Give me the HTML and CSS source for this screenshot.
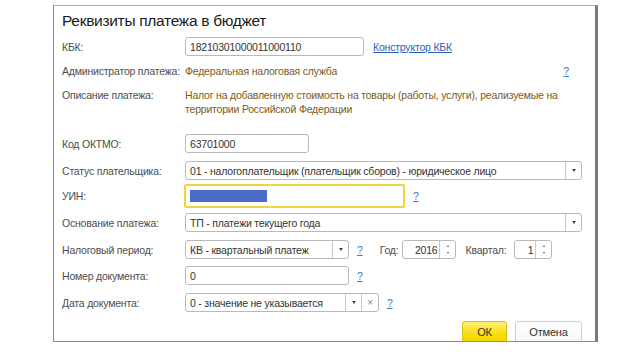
FILE: index.html
```html
<!DOCTYPE html>
<html lang="ru">
<head>
<meta charset="utf-8">
<title>Реквизиты платежа в бюджет</title>
<link rel="stylesheet" href="styles.css">
</head>
<body>
<div class="dialog">
  <div class="title">Реквизиты платежа в бюджет</div>

  <div class="row r-kbk">
    <div class="label">КБК:</div>
    <div class="field w-kbk"><span class="val">18210301000011000110</span></div>
    <a class="link" href="#">Конструктор КБК</a>
  </div>

  <div class="row r-admin">
    <div class="label">Администратор платежа:</div>
    <div class="info">Федеральная налоговая служба</div>
    <a class="help help-right" href="#">?</a>
  </div>

  <div class="row r-desc">
    <div class="label">Описание платежа:</div>
    <div class="info multi">Налог на добавленную стоимость на товары (работы, услуги), реализуемые на территории Российской Федерации</div>
  </div>

  <div class="row r-oktmo">
    <div class="label">Код ОКТМО:</div>
    <div class="field w-oktmo"><span class="val">63701000</span></div>
  </div>

  <div class="row r-status">
    <div class="label">Статус плательщика:</div>
    <div class="field combo w-wide"><span class="val">01 - налогоплательщик (плательщик сборов) - юридическое лицо</span><span class="btn"><i class="tri"></i></span></div>
  </div>

  <div class="row r-uin">
    <div class="label">УИН:</div>
    <div class="field focus w-uin"><span class="mask"></span></div>
    <a class="help" href="#">?</a>
  </div>

  <div class="row r-base">
    <div class="label">Основание платежа:</div>
    <div class="field combo w-wide"><span class="val">ТП - платежи текущего года</span><span class="btn"><i class="tri"></i></span></div>
  </div>

  <div class="row r-period">
    <div class="label">Налоговый период:</div>
    <div class="field combo w-period"><span class="val">КВ - квартальный платеж</span><span class="btn"><i class="tri"></i></span></div>
    <a class="help" href="#">?</a>
    <div class="sublabel lbl-year">Год:</div>
    <div class="field spin w-year"><span class="val num">2016</span><span class="spinbtn"><i class="up"></i><i class="dn"></i></span></div>
    <div class="sublabel lbl-q">Квартал:</div>
    <div class="field spin w-q"><span class="val num">1</span><span class="spinbtn"><i class="up"></i><i class="dn"></i></span></div>
  </div>

  <div class="row r-num">
    <div class="label">Номер документа:</div>
    <div class="field w-period"><span class="val">0</span></div>
    <a class="help" href="#">?</a>
  </div>

  <div class="row r-date">
    <div class="label">Дата документа:</div>
    <div class="field combo w-date"><span class="val">0 - значение не указывается</span><span class="btn"><i class="tri"></i></span><span class="btn clr">×</span></div>
    <a class="help help-date" href="#">?</a>
  </div>

  <div class="row r-buttons">
    <button class="button ok" type="button">ОК</button>
    <button class="button cancel" type="button">Отмена</button>
  </div>
</div>
</body>
</html>
```

FILE: styles.css
```css
html, body {
  margin: 0;
  padding: 0;
  background: #ffffff;
}
body {
  width: 640px;
  height: 354px;
  overflow: hidden;
  font-family: "Liberation Sans", Arial, sans-serif;
  font-size: 10.5px;
  letter-spacing: -0.2px;
  color: #4a4a4a;
}
.dialog {
  box-sizing: border-box;
  margin: 5px 0 0 53px;
  width: 545px;
  height: 337px;
  border-top: 1px solid #a9a9a9;
  border-left: 1px solid #8e8e8e;
  border-bottom: 1px solid #8e8e8e;
  border-right: 3px solid #7a7a7a;
  overflow: hidden;
  padding-left: 8px;
  display: flex;
  flex-direction: column;
}
.title {
  height: 31px;
  line-height: 28px;
  font-size: 15.5px;
  letter-spacing: -0.3px;
  color: #1a1a1a;
  padding-top: 1px;
  box-sizing: border-box;
}
.row {
  display: flex;
  align-items: center;
  flex: none;
}
.label {
  width: 123px;
  flex: none;
  color: #4d4d4d;
  white-space: nowrap;
}
.field {
  box-sizing: border-box;
  height: 19px;
  border: 1px solid #b9b9b9;
  border-radius: 3px;
  background: #fff;
  display: flex;
  align-items: center;
  color: #333;
  flex: none;
  overflow: hidden;
}
.val {
  flex: 1;
  padding-left: 4px;
  white-space: nowrap;
  overflow: hidden;
}
.num {
  text-align: right;
  padding-right: 2px;
}
.combo .btn {
  width: 15px;
  height: 100%;
  border-left: 1px solid #c8c8c8;
  display: flex;
  align-items: center;
  justify-content: center;
  flex: none;
}
.tri {
  width: 0;
  height: 0;
  border-left: 2.5px solid transparent;
  border-right: 2.5px solid transparent;
  border-top: 3px solid #444;
}
.clr {
  color: #888;
  font-size: 10px;
}
.combo .clr {
  width: 16px;
}
.spinbtn {
  width: 16px;
  height: 100%;
  border-left: 1px solid #c8c8c8;
  display: flex;
  flex-direction: column;
  align-items: center;
  justify-content: space-around;
  flex: none;
  box-sizing: border-box;
  padding: 2px 0;
}
.spinbtn .up {
  width: 0;
  height: 0;
  border-left: 1.5px solid transparent;
  border-right: 1.5px solid transparent;
  border-bottom: 2px solid #555;
}
.spinbtn .dn {
  width: 0;
  height: 0;
  border-left: 1.5px solid transparent;
  border-right: 1.5px solid transparent;
  border-top: 2px solid #555;
}
.info {
  color: #7d5b17;
}
.multi {
  width: 375px;
  line-height: 14px;
}
.link {
  color: #2d5fb4;
  text-decoration: underline;
  margin-left: 9px;
}
.help {
  color: #3d74c6;
  text-decoration: underline;
  margin-left: 8px;
}
.help-right {
  margin-left: auto;
  margin-right: 26px;
}
.help-date {
  margin-left: 8px;
}
.sublabel {
  color: #4d4d4d;
}
.lbl-year {
  margin-left: 17px;
  margin-right: 4px;
}
.lbl-q {
  margin-left: 9px;
  margin-right: 8px;
}

/* widths */
.w-kbk { width: 179px; }
.w-oktmo { width: 124px; }
.w-wide { width: 397px; }
.w-uin { width: 221px; }
.w-period { width: 164px; }
.w-year { width: 54px; }
.w-q { width: 38px; }
.w-date { width: 194px; }

.focus {
  height: 24px;
  border: 2px solid #f2d33f;
  border-radius: 2px;
  margin-left: -1px;
}
.mask {
  display: block;
  width: 77px;
  height: 12px;
  margin-left: 4px;
  background: #4c6cc4;
}

/* vertical rhythm */
.r-kbk { margin-top: 2px; height: 19px; }
.r-admin { margin-top: 6px; height: 18px; }
.r-desc { margin-top: 8px; height: 28px; align-items: flex-start; }
.r-desc .label { line-height: 14px; }
.r-oktmo { margin-top: 18px; height: 19px; }
.r-status { margin-top: 8px; height: 19px; }
.r-uin { margin-top: 4px; height: 24px; }
.r-base { margin-top: 5px; height: 19px; }
.r-period { margin-top: 8px; height: 19px; }
.r-num { margin-top: 7px; height: 19px; }
.r-date { margin-top: 8px; height: 19px; }
.r-buttons {
  margin-top: 9px;
  height: 24px;
  align-items: flex-start;
  padding-left: 400px;
}
.button {
  box-sizing: border-box;
  height: 24px;
  border-radius: 3px;
  font-family: "Liberation Sans", Arial, sans-serif;
  font-size: 11px;
  letter-spacing: -0.2px;
  color: #333;
  padding: 0 0 3px 0;
  margin: 0;
}
.ok {
  width: 45px;
  background: linear-gradient(#fff176, #f7dc00 60%, #f3d300);
  border: 1px solid #d9bf1a;
}
.cancel {
  width: 67px;
  margin-left: 8px;
  background: linear-gradient(#ffffff, #f6f6f6);
  border: 1px solid #cfcfcf;
  box-shadow: 0 1px 1px rgba(0,0,0,0.12);
}
```
